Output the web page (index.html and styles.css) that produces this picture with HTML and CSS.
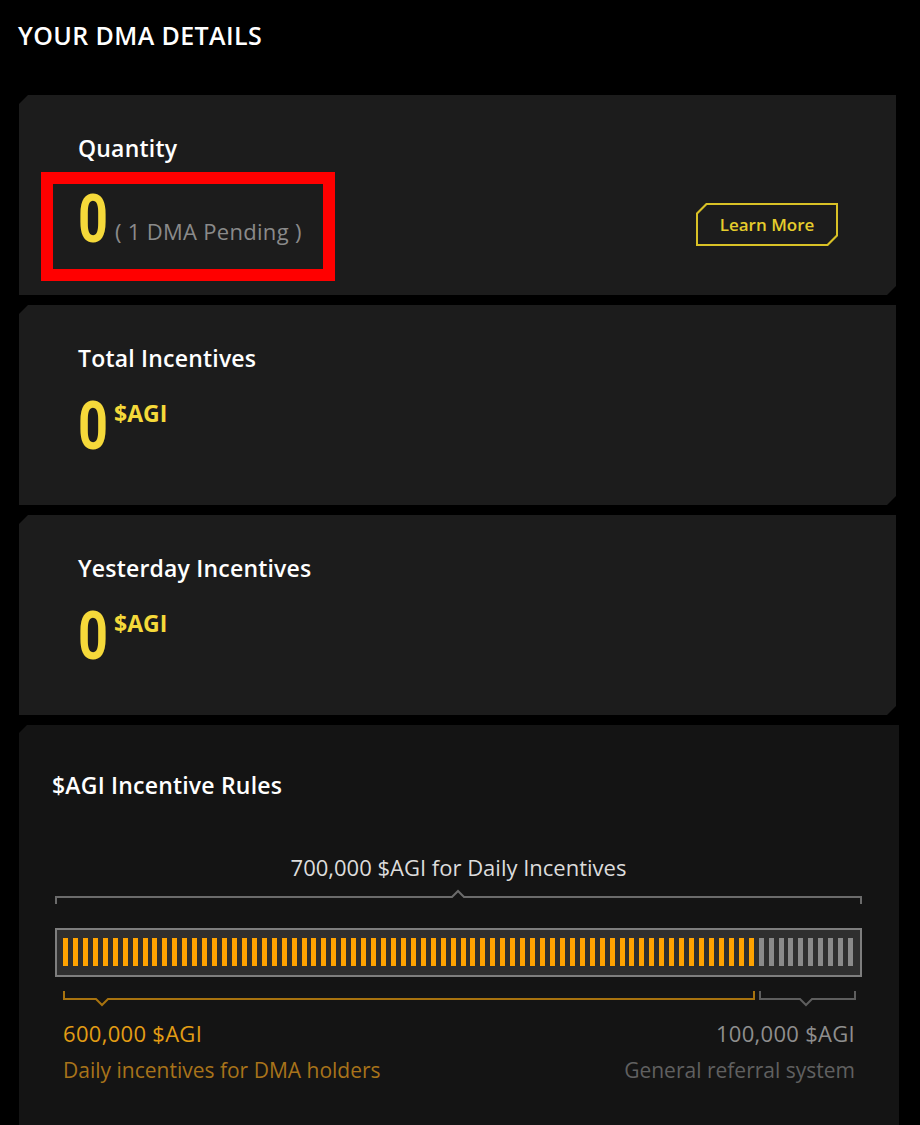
FILE: index.html
```html
<!DOCTYPE html>
<html lang="en">
<head>
  <meta charset="UTF-8" />
  <meta name="viewport" content="width=device-width, initial-scale=1.0"/>
  <title>Your DMA Details</title>
  <link rel="stylesheet" href="styles.css">
</head>
<body>
  <main class="page">
    <h1 class="page-title">YOUR DMA DETAILS</h1>

    <section class="card card-quantity">
      <div class="card-body">
        <h2 class="card-label">Quantity</h2>
        <div class="card-value">
          <span class="big-num">0</span>
          <span class="pending">( 1 DMA Pending )</span>
        </div>
      </div>
      <a class="btn-learn" href="#"><span>Learn More</span></a>
      <div class="highlight"></div>
    </section>

    <section class="card">
      <div class="card-body">
        <h2 class="card-label">Total Incentives</h2>
        <div class="card-value">
          <span class="big-num">0</span>
          <span class="unit">$AGI</span>
        </div>
      </div>
    </section>

    <section class="card">
      <div class="card-body">
        <h2 class="card-label">Yesterday Incentives</h2>
        <div class="card-value">
          <span class="big-num">0</span>
          <span class="unit">$AGI</span>
        </div>
      </div>
    </section>

    <section class="rules">
      <h2 class="rules-title">$AGI Incentive Rules</h2>
      <div class="pool-total">700,000 $AGI for Daily Incentives</div>
      <svg class="bracket-top" width="807" height="16" viewBox="0 0 807 16">
        <path d="M1 15 V8 H397 L403 2 L409 8 H806 V15" fill="none" stroke="#6b6b6b" stroke-width="2"/>
      </svg>
      <div class="bar" id="bar"></div>
      <svg class="bracket-bottom" width="807" height="20" viewBox="0 0 807 20">
        <path d="M9 2 V10 H41 L47 16 L53 10 H699 V2" fill="none" stroke="#a8730f" stroke-width="2"/>
        <path d="M705 2 V10 H745 L751 16 L757 10 H800 V2" fill="none" stroke="#5e5e5e" stroke-width="2"/>
      </svg>
      <div class="split">
        <div class="split-item split-main">
          <div class="split-amount">600,000 $AGI</div>
          <div class="split-desc">Daily incentives for DMA holders</div>
        </div>
        <div class="split-item split-ref">
          <div class="split-amount">100,000 $AGI</div>
          <div class="split-desc">General referral system</div>
        </div>
      </div>
    </section>
  </main>

  <script>
    // 80 segments, 70 for DMA holders and 10 for referrals
    const bar = document.getElementById("bar");
    for (let i = 0; i < 80; i++) {
      const seg = document.createElement("span");
      seg.className = i < 70 ? "seg seg-on" : "seg";
      bar.appendChild(seg);
    }
  </script>
</body>
</html>
```

FILE: styles.css
```css
body { margin: 0; background: #000; color: #fff; font-family: "Open Sans", Arial, sans-serif; }
.page { padding: 19px 0 0 19px; }
.page-title { margin: 0 0 44px -1px; font-size: 25px; line-height: 32px; font-weight: 600; letter-spacing: 0.4px; }

.card {
  position: relative;
  width: 877px; height: 200px; box-sizing: border-box;
  margin-bottom: 10px; padding: 38px 58px 0 59px;
  background: #1c1c1c;
  display: flex; justify-content: space-between; align-items: flex-start;
  clip-path: polygon(9px 0, 100% 0, 100% calc(100% - 9px), calc(100% - 9px) 100%, 0 100%, 0 9px);
}
.card-label { margin: 0; font-size: 23px; line-height: 30px; font-weight: 600; letter-spacing: 0.2px; }
.card-value { display: flex; align-items: flex-start; margin-top: 20px; }
.card-quantity .card-value { align-items: baseline; margin-top: 23px; }
.big-num {
  display: inline-block; width: 30px;
  font-family: Roboto, "Open Sans", sans-serif; font-size: 67px; line-height: 1; font-weight: 700;
  color: #f5d93a; transform: scaleX(0.78); transform-origin: left;
}
.pending { position: relative; top: -2px; margin-left: 7px; font-size: 22px; letter-spacing: 0.3px; color: #8a8a8a; }
.unit { margin: 7px 0 0 6px; font-size: 23px; line-height: 26px; font-weight: 700; color: #f5d93a; }

.btn-learn {
  align-self: flex-end; margin-bottom: 49px;
  display: block; width: 142px; height: 43px; box-sizing: border-box; padding: 2px;
  background: #d9c126; text-decoration: none;
  clip-path: polygon(10px 0, 100% 0, 100% calc(100% - 10px), calc(100% - 10px) 100%, 0 100%, 0 10px);
}
.btn-learn span {
  display: flex; align-items: center; justify-content: center; height: 100%;
  background: #1c1c1c; color: #e6cd2c; font-size: 17px; font-weight: 600;
  clip-path: polygon(9px 0, 100% 0, 100% calc(100% - 9px), calc(100% - 9px) 100%, 0 100%, 0 9px);
}
.highlight { position: absolute; left: 22px; top: 77px; width: 294px; height: 109px; box-sizing: border-box; border: 12px solid #ff0000; }

.rules {
  width: 880px; box-sizing: border-box; padding: 45px 37px 60px 36px;
  background: #141414;
  clip-path: polygon(8px 0, 100% 0, 100% 100%, 0 100%, 0 8px);
}
.rules-title { margin: 0 0 53px -3px; font-size: 23px; line-height: 30px; font-weight: 600; letter-spacing: 0.2px; }
.pool-total { text-align: center; font-size: 22px; line-height: 28px; color: #dcdcdc; }
.bracket-top { display: block; margin-top: 8px; }
.bar {
  display: flex; justify-content: space-between;
  width: 807px; height: 49px; box-sizing: border-box; margin-top: 23px; padding: 8px 6px 9px;
  background: #2f2f2f; border: 2px solid #7e7e7e;
}
.seg { width: 5px; background: #8a8a8a; }
.seg-on { background: #ffa300; }
.bracket-bottom { display: block; margin-top: 12px; }
.split { display: flex; justify-content: space-between; margin: 10px 7px 0 8px; font-size: 21px; line-height: 28px; }
.split-amount { font-size: 22px; letter-spacing: 0.3px; }
.split-desc { margin-top: 9px; }
.split-ref { text-align: right; }
.split-main .split-amount { color: #e39d14; }
.split-main .split-desc { color: #a8731a; }
.split-ref .split-amount { color: #8e8e8e; }
.split-ref .split-desc { color: #606060; }
```
